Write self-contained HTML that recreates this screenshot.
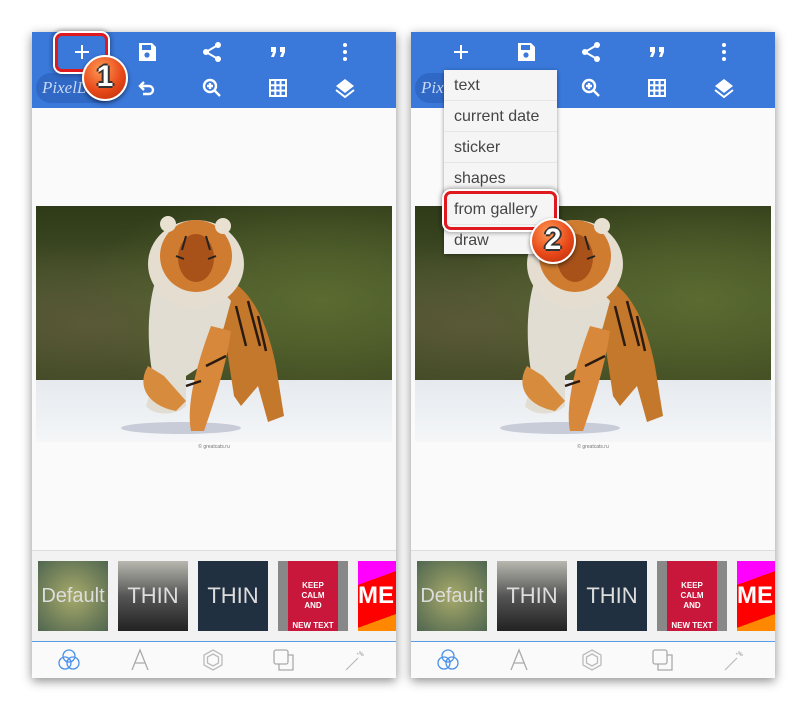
<!DOCTYPE html>
<html><head><meta charset="utf-8"><style>
*{margin:0;padding:0;box-sizing:border-box}
body{width:806px;height:710px;background:#fff;position:relative;overflow:hidden;font-family:"Liberation Sans",sans-serif}
.scr{position:absolute;top:32px;width:364px;height:646px;background:#fafafa;box-shadow:0 3px 10px rgba(0,0,0,.45);overflow:hidden}
.hd{position:absolute;left:0;top:0;width:100%;height:76px;background:#3a78da}
.ic{position:absolute;width:24px;height:24px;transform:translate(-12px,-12px)}
.logo{position:absolute;left:4px;top:41px;width:80px;height:30px;border-radius:15px;background:#3068c6;color:#c8d8f4;font-family:"Liberation Serif",serif;font-style:italic;font-size:17px;line-height:30px;padding-left:6px}
.img{position:absolute;left:4px;top:174px;width:356px;height:236px;overflow:hidden;background:radial-gradient(ellipse at 80% 40%,#5a6a30,transparent 60%),radial-gradient(ellipse at 15% 50%,#5a5838,transparent 50%),linear-gradient(180deg,#2f3a18 0%,#46542a 40%,#3c4720 70%,#4a4a30 100%)}
.cap{position:absolute;top:412px;width:100%;text-align:center;font-size:5px;color:#777}
.strip{position:absolute;top:518px;left:0;width:100%;height:91px;background:#f2f2f2;border-top:1px solid #ddd}
.th{position:absolute;top:10px;width:70px;height:70px;overflow:hidden;color:#ddd;font-size:22px;text-align:center;line-height:70px}
.nav{position:absolute;top:609px;left:0;width:100%;height:37px;background:#fafafa;border-top:1px solid #5a9be6}
.badge{position:absolute;width:46px;height:46px;border-radius:50%;background:radial-gradient(circle at 40% 30%,#ff9a55,#e8491a 55%,#b52a08);box-shadow:0 2px 4px rgba(0,0,0,.5);border:2px solid #fff;color:#fff;font-size:30px;font-weight:bold;text-align:center;line-height:40px;text-shadow:-2px 0 #333,2px 0 #333,0 -2px #333,0 2px #333}
.rr{position:absolute;border:3px solid #e0191e;border-radius:7px;box-shadow:0 0 0 2px #fff,0 0 5px 3px rgba(0,0,0,.35)}
.menu{position:absolute;left:33px;top:38px;width:113px;height:184px;background:#f5f5f5;box-shadow:0 1px 4px rgba(0,0,0,.4)}
.menu div{height:31px;line-height:31px;padding-left:10px;font-size:16px;color:#454545;border-bottom:1px solid #e6e6e6}
.t{position:absolute}
</style></head><body>

<!-- LEFT -->
<div class="scr" style="left:32px">
 <div class="hd">
  <svg class="ic" style="left:50px;top:20px" viewBox="0 0 24 24"><path d="M12 5v14M5 12h14" stroke="#fff" stroke-width="2"/></svg>
  <svg class="ic" style="left:115px;top:20px" viewBox="0 0 24 24"><path d="M4 3h13l4 4v14H4z" fill="#fff"/><rect x="7" y="5" width="9" height="5" fill="#3a78da"/><circle cx="12" cy="15" r="2.6" fill="#3a78da"/></svg>
  <svg class="ic" style="left:180px;top:20px" viewBox="0 0 24 24"><circle cx="18" cy="5" r="3" fill="#fff"/><circle cx="6" cy="12" r="3" fill="#fff"/><circle cx="18" cy="19" r="3" fill="#fff"/><path d="M18 5L6 12l12 7" stroke="#fff" stroke-width="2" fill="none"/></svg>
  <svg class="ic" style="left:246px;top:20px" viewBox="0 0 24 24"><path d="M5 7h5v5l-2 5H5l2-5H5zM14 7h5v5l-2 5h-3l2-5h-2z" fill="#fff"/></svg>
  <svg class="ic" style="left:313px;top:20px" viewBox="0 0 24 24"><circle cx="12" cy="5" r="2" fill="#fff"/><circle cx="12" cy="12" r="2" fill="#fff"/><circle cx="12" cy="19" r="2" fill="#fff"/></svg>
  <div class="logo">PixelLab</div>
  <svg class="ic" style="left:115px;top:56px" viewBox="0 0 24 24"><path d="M9 6L5 10l4 4M5 10h9a4 4 0 010 8H8" stroke="#fff" stroke-width="2.4" fill="none"/></svg>
  <svg class="ic" style="left:180px;top:56px" viewBox="0 0 24 24"><circle cx="10" cy="10" r="6" stroke="#fff" stroke-width="2.4" fill="none"/><path d="M14.5 14.5L20 20M10 7v6M7 10h6" stroke="#fff" stroke-width="2.4"/></svg>
  <svg class="ic" style="left:246px;top:56px" viewBox="0 0 24 24"><path d="M4 4h16v16H4zM4 9.3h16M4 14.6h16M9.3 4v16M14.6 4v16" stroke="#fff" stroke-width="2" fill="none"/></svg>
  <svg class="ic" style="left:313px;top:56px" viewBox="0 0 24 24"><path d="M12 3l9 7-9 7-9-7z" fill="#fff"/><path d="M3 14l9 7 9-7" stroke="#fff" stroke-width="2" fill="none"/></svg>
 </div>
 <div class="img">
  <div class="t" style="left:0;top:174px;width:100%;height:62px;background:linear-gradient(#e6eaee,#f4f6f8)"></div>
  <svg class="t" style="left:0;top:0" width="356" height="236" viewBox="0 0 356 236">
   <ellipse cx="145" cy="222" rx="60" ry="6" fill="#c8ccd8"/>
   <path d="M180 70 C215 75 232 120 240 160 L248 210 L232 216 L222 180 L205 200 L198 190 Z" fill="#c4782c"/>
   <path d="M118 80 C110 110 112 150 118 175 L110 200 C118 210 140 210 150 200 L150 170 L180 150 L195 95 C185 80 140 75 118 80 Z" fill="#e2ddd2"/>
   <path d="M112 160 C100 180 112 200 140 205 L150 195 L128 170 Z" fill="#d68c3c"/>
   <path d="M175 120 C160 160 150 200 155 225 L168 225 C180 190 190 160 195 125 Z" fill="#d8883a"/>
   <path d="M200 100l10 40M212 95l12 45M222 110l8 35M190 150l-20 10M165 175l-15 5" stroke="#2a1a10" stroke-width="2.5"/>
   <ellipse cx="160" cy="58" rx="48" ry="44" fill="#e4ddd0"/>
   <ellipse cx="160" cy="50" rx="36" ry="36" fill="#d07c30"/>
   <ellipse cx="160" cy="52" rx="18" ry="24" fill="#a8521a"/>
   <circle cx="132" cy="18" r="8" fill="#e8e0d0"/><circle cx="187" cy="20" r="8" fill="#e8e0d0"/>
   <path d="M140 50l8 3M180 50l-8 3M150 30l-4 14M170 30l4 14" stroke="#222" stroke-width="2"/>
  </svg>
 </div>
 <div class="cap">© greatcats.ru</div>
 <div class="strip">
  <div class="th" style="left:6px;background:radial-gradient(#a8aa6a,#4f6650);font-size:20px">Default</div>
  <div class="th" style="left:86px;background:linear-gradient(#b8b8b0,#555 50%,#222)">THIN</div>
  <div class="th" style="left:166px;background:#213040">THIN</div>
  <div class="th" style="left:246px;background:linear-gradient(90deg,#888 14%,#c8173a 14%,#c8173a 86%,#888 86%);color:#fff;font-size:8px;font-weight:bold;line-height:10px;padding-top:20px">KEEP<br>CALM<br>AND<br><br>NEW TEXT</div>
  <div class="th" style="left:326px;background:linear-gradient(160deg,#f0f 25%,#f00 25%,#f00 70%,#f80 70%);color:#fff;font-weight:bold;font-size:24px;text-align:left">ME</div>
 </div>
 <div class="nav">
  <svg class="ic" style="left:37px;top:18px" viewBox="0 0 24 24"><g stroke="#4a90ea" stroke-width="1.3" fill="none"><circle cx="12" cy="8" r="6"/><circle cx="8" cy="15" r="6"/><circle cx="16" cy="15" r="6"/></g></svg>
  <svg class="ic" style="left:108px;top:18px" viewBox="0 0 24 24"><path d="M4 22L12 2l8 20M7 15h10" stroke="#aaa" stroke-width="1.3" fill="none"/></svg>
  <svg class="ic" style="left:181px;top:18px" viewBox="0 0 24 24"><g stroke="#bbb" stroke-width="1.3" fill="none"><path d="M12 2l9 5v10l-9 5-9-5V7z"/><path d="M12 6l5.5 3v6L12 18l-5.5-3V9z"/></g></svg>
  <svg class="ic" style="left:252px;top:18px" viewBox="0 0 24 24"><g stroke="#aaa" stroke-width="1.3" fill="none"><rect x="2" y="2" width="14" height="14" rx="2"/><path d="M16 7h5v15H7v-6"/></g></svg>
  <svg class="ic" style="left:323px;top:18px" viewBox="0 0 24 24"><path d="M3 22L15 10M17 3v3M21 7h-3M19.5 4.5l-2 2M14 5l1.5 1.5" stroke="#bbb" stroke-width="1.2" fill="none"/></svg>
 </div>
</div>

<!-- RIGHT -->
<div class="scr" style="left:411px">
 <div class="hd">
  <svg class="ic" style="left:50px;top:20px" viewBox="0 0 24 24"><path d="M12 5v14M5 12h14" stroke="#fff" stroke-width="2"/></svg>
  <svg class="ic" style="left:115px;top:20px" viewBox="0 0 24 24"><path d="M4 3h13l4 4v14H4z" fill="#fff"/><rect x="7" y="5" width="9" height="5" fill="#3a78da"/><circle cx="12" cy="15" r="2.6" fill="#3a78da"/></svg>
  <svg class="ic" style="left:180px;top:20px" viewBox="0 0 24 24"><circle cx="18" cy="5" r="3" fill="#fff"/><circle cx="6" cy="12" r="3" fill="#fff"/><circle cx="18" cy="19" r="3" fill="#fff"/><path d="M18 5L6 12l12 7" stroke="#fff" stroke-width="2" fill="none"/></svg>
  <svg class="ic" style="left:246px;top:20px" viewBox="0 0 24 24"><path d="M5 7h5v5l-2 5H5l2-5H5zM14 7h5v5l-2 5h-3l2-5h-2z" fill="#fff"/></svg>
  <svg class="ic" style="left:313px;top:20px" viewBox="0 0 24 24"><circle cx="12" cy="5" r="2" fill="#fff"/><circle cx="12" cy="12" r="2" fill="#fff"/><circle cx="12" cy="19" r="2" fill="#fff"/></svg>
  <div class="logo">PixelLab</div>
  <svg class="ic" style="left:180px;top:56px" viewBox="0 0 24 24"><circle cx="10" cy="10" r="6" stroke="#fff" stroke-width="2.4" fill="none"/><path d="M14.5 14.5L20 20M10 7v6M7 10h6" stroke="#fff" stroke-width="2.4"/></svg>
  <svg class="ic" style="left:246px;top:56px" viewBox="0 0 24 24"><path d="M4 4h16v16H4zM4 9.3h16M4 14.6h16M9.3 4v16M14.6 4v16" stroke="#fff" stroke-width="2" fill="none"/></svg>
  <svg class="ic" style="left:313px;top:56px" viewBox="0 0 24 24"><path d="M12 3l9 7-9 7-9-7z" fill="#fff"/><path d="M3 14l9 7 9-7" stroke="#fff" stroke-width="2" fill="none"/></svg>
 </div>
 <div class="img">
  <div class="t" style="left:0;top:174px;width:100%;height:62px;background:linear-gradient(#e6eaee,#f4f6f8)"></div>
  <svg class="t" style="left:0;top:0" width="356" height="236" viewBox="0 0 356 236">
   <ellipse cx="145" cy="222" rx="60" ry="6" fill="#c8ccd8"/>
   <path d="M180 70 C215 75 232 120 240 160 L248 210 L232 216 L222 180 L205 200 L198 190 Z" fill="#c4782c"/>
   <path d="M118 80 C110 110 112 150 118 175 L110 200 C118 210 140 210 150 200 L150 170 L180 150 L195 95 C185 80 140 75 118 80 Z" fill="#e2ddd2"/>
   <path d="M112 160 C100 180 112 200 140 205 L150 195 L128 170 Z" fill="#d68c3c"/>
   <path d="M175 120 C160 160 150 200 155 225 L168 225 C180 190 190 160 195 125 Z" fill="#d8883a"/>
   <path d="M200 100l10 40M212 95l12 45M222 110l8 35M190 150l-20 10M165 175l-15 5" stroke="#2a1a10" stroke-width="2.5"/>
   <ellipse cx="160" cy="58" rx="48" ry="44" fill="#e4ddd0"/>
   <ellipse cx="160" cy="50" rx="36" ry="36" fill="#d07c30"/>
   <ellipse cx="160" cy="52" rx="18" ry="24" fill="#a8521a"/>
   <circle cx="132" cy="18" r="8" fill="#e8e0d0"/><circle cx="187" cy="20" r="8" fill="#e8e0d0"/>
   <path d="M140 50l8 3M180 50l-8 3M150 30l-4 14M170 30l4 14" stroke="#222" stroke-width="2"/>
  </svg>
 </div>
 <div class="cap">© greatcats.ru</div>
 <div class="strip">
  <div class="th" style="left:6px;background:radial-gradient(#a8aa6a,#4f6650);font-size:20px">Default</div>
  <div class="th" style="left:86px;background:linear-gradient(#b8b8b0,#555 50%,#222)">THIN</div>
  <div class="th" style="left:166px;background:#213040">THIN</div>
  <div class="th" style="left:246px;background:linear-gradient(90deg,#888 14%,#c8173a 14%,#c8173a 86%,#888 86%);color:#fff;font-size:8px;font-weight:bold;line-height:10px;padding-top:20px">KEEP<br>CALM<br>AND<br><br>NEW TEXT</div>
  <div class="th" style="left:326px;background:linear-gradient(160deg,#f0f 25%,#f00 25%,#f00 70%,#f80 70%);color:#fff;font-weight:bold;font-size:24px;text-align:left">ME</div>
 </div>
 <div class="nav">
  <svg class="ic" style="left:37px;top:18px" viewBox="0 0 24 24"><g stroke="#4a90ea" stroke-width="1.3" fill="none"><circle cx="12" cy="8" r="6"/><circle cx="8" cy="15" r="6"/><circle cx="16" cy="15" r="6"/></g></svg>
  <svg class="ic" style="left:108px;top:18px" viewBox="0 0 24 24"><path d="M4 22L12 2l8 20M7 15h10" stroke="#aaa" stroke-width="1.3" fill="none"/></svg>
  <svg class="ic" style="left:181px;top:18px" viewBox="0 0 24 24"><g stroke="#bbb" stroke-width="1.3" fill="none"><path d="M12 2l9 5v10l-9 5-9-5V7z"/><path d="M12 6l5.5 3v6L12 18l-5.5-3V9z"/></g></svg>
  <svg class="ic" style="left:252px;top:18px" viewBox="0 0 24 24"><g stroke="#aaa" stroke-width="1.3" fill="none"><rect x="2" y="2" width="14" height="14" rx="2"/><path d="M16 7h5v15H7v-6"/></g></svg>
  <svg class="ic" style="left:323px;top:18px" viewBox="0 0 24 24"><path d="M3 22L15 10M17 3v3M21 7h-3M19.5 4.5l-2 2M14 5l1.5 1.5" stroke="#bbb" stroke-width="1.2" fill="none"/></svg>
 </div>
 <div class="menu">
  <div>text</div><div>current date</div><div>sticker</div><div>shapes</div><div>from gallery</div><div style="border:0">draw</div>
 </div>
</div>

<div class="rr" style="left:55px;top:33px;width:53px;height:39px"></div>
<div class="badge" style="left:82px;top:55px">1</div>
<div class="rr" style="left:444px;top:191px;width:113px;height:39px"></div>
<div class="badge" style="left:530px;top:218px">2</div>
</body></html>
